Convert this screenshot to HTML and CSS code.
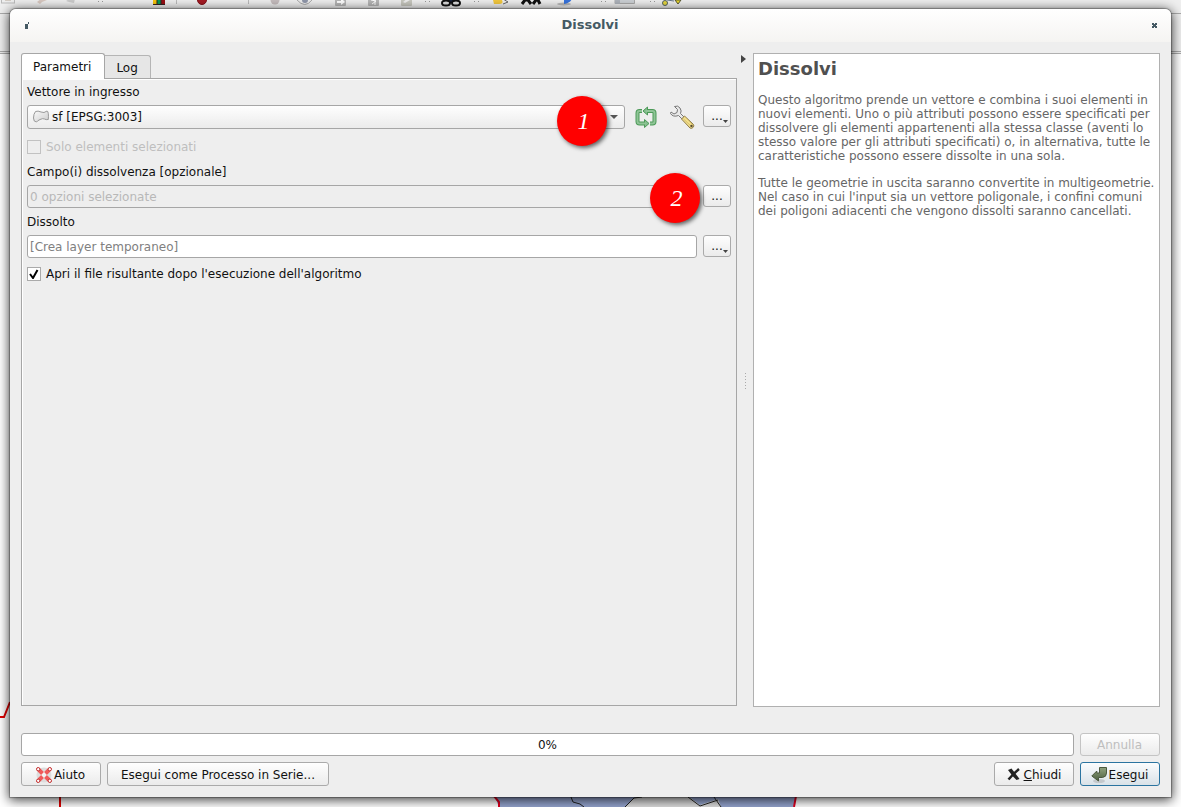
FILE: index.html
```html
<!DOCTYPE html>
<html lang="it">
<head>
<meta charset="utf-8">
<title>Dissolvi</title>
<link rel="stylesheet" href="styles.css">
</head>
<body>
<div class="backdrop" aria-hidden="true">
  <svg class="toolbar-art" width="1181" height="13" viewBox="0 0 1181 13">
    <rect x="1.500" y="-6" width="13" height="9" fill="#eee" stroke="#bbb"/><path d="M5 -2v2h6v-2" fill="none" stroke="#b8a999"/>
    <path d="M37 2l5-4 5 2-5 2-2 2z" fill="#d8c8c0"/><path d="M66 1l5-3 4 1-1 4-5-1z" fill="#ccc"/>
    <path d="M98 1.500h1m3 0h1m322 0h1m3 0h1m44 0h1m3 0h1m122 0h1m3 0h1m44 0h1m3 0h1" stroke="#999"/>
    <path d="M153 0h4v5h-4z" fill="#f6c40b"/><path d="M157 0h4v5h-4z" fill="#079a57"/><path d="M161 0h4v5h-4z" fill="#980e14"/><path d="M153 4.500h12M157 0v5M161 0v5" stroke="#322"/>
    <path d="M176.500 0v4M248.500 0v4" stroke="#bbb"/>
    <circle cx="202" cy="0" r="4.500" fill="#a51b24" stroke="#801018"/>
    <circle cx="275" cy="0" r="4.500" fill="#c6bdbe"/>
    <path d="M297 0q8 9 15 0" fill="#eee" stroke="#aaa"/><circle cx="305" cy="0" r="3" fill="#9097aa"/>
    <rect x="335" y="-5" width="11" height="11" rx="1" fill="#b7b7b7"/><path d="M337 1h4v-3l4 4-4 3v-2h-4z" fill="#fff"/>
    <rect x="368" y="-5" width="11" height="11" rx="1" fill="#b7b7b7"/><path d="M371 0l5 1-4 3m3-4v5" stroke="#fff" fill="none"/>
    <rect x="401" y="-5" width="11" height="11" rx="1" fill="#c8c8bf"/><path d="M403 2l5-4 2 2-5 3z" fill="#eee"/>
    <path d="M444 0h14v3h-14z" fill="#1b2742"/><ellipse cx="446" cy="3" rx="4" ry="2.500" fill="#ddd" stroke="#111" stroke-width="2"/><ellipse cx="456" cy="3" rx="4" ry="2.500" fill="#ddd" stroke="#111" stroke-width="2"/>
    <path d="M493 0h9q2 4-3 4h-5z" fill="#f3c83e"/><path d="M503 4l5-2-5-3" fill="none" stroke="#666"/>
    <path d="M522 4l3-4h3l3 4m2 0l3-4h2l2 4" fill="none" stroke="#111" stroke-width="3"/>
    <ellipse cx="564" cy="4" rx="7" ry="1.500" fill="#bbb"/><path d="M564 4v-5h8q-2 4-8 5z" fill="#3673dd"/>
    <path d="M615 -1h19.500v4.500H615z" fill="#ccd0d4" stroke="#aaa"/><path d="M615 0h5v4h-5z" fill="#aeb3bb"/>
    <circle cx="665" cy="3" r="2.500" fill="#e9d93c" stroke="#566"/><path d="M667 0l7 1" stroke="#678"/><path d="M675 0h6l-3 4z" fill="#f2df28" stroke="#553"/>
  </svg>
  <div class="toolbar-band"></div>
  <svg class="map-art" width="1181" height="107" viewBox="0 0 1181 107">
    <path d="M0 17h4l6-15M60 97v10" fill="none" stroke="#e00000" stroke-width="2"/>
    <path d="M495 97l4 10h295l2-10z" fill="#94a4ce"/>
    <path d="M625 107l9-9 8-2h46l12 9 18-6 3 8z" fill="#ddd"/>
    <path d="M571 97l2 5 7 2 4 3M625 107l9-9 8-1M688 97l12 9 18-6M714 97l7 10" fill="none" stroke="#222"/>
    <path d="M494 96l5 6v5M796 96l-2 11" fill="none" stroke="#e00020" stroke-width="2"/>
  </svg>
</div>

<main class="dialog">
  <header class="titlebar">
    <svg class="app-mark" width="6" height="7" viewBox="0 0 6 7"><path d="M1 2h3v5H1zM4 0h1v2H4z" fill="#455a64"/></svg>
    <h1 class="title">Dissolvi</h1>
    <button class="close" type="button" aria-label="Chiudi finestra"><svg width="5" height="5" viewBox="0 0 5 5"><path d="M0 0h2v1h1V0h2v2H4v1h1v2H3V4H2v1H0V3h1V2H0z" fill="#455a64"/></svg></button>
  </header>

  <div class="content">
    <div class="columns">
      <section class="left">
        <div class="tabs" role="tablist">
          <button class="tab tab-active" role="tab" aria-selected="true" type="button">Parametri</button>
          <button class="tab" role="tab" aria-selected="false" type="button">Log</button>
        </div>
        <form class="panel">
          <label class="label" for="layer">Vettore in ingresso</label>
          <div class="row">
            <div class="combo">
              <svg class="combo-icon" width="16" height="13" viewBox="0 0 16 13"><defs><linearGradient id="poly" x2="1" y2="1"><stop offset="0" stop-color="#fafafa"/><stop offset="1" stop-color="#ccc"/></linearGradient></defs><path d="M2.500 1.500Q5 .5 8 2t6-1q1 0 1.300 2.500t0 6Q13 10 11.500 9T7 9.500 3.500 12Q.5 12 .5 8t2-6.500z" fill="url(#poly)" stroke="#999"/></svg>
              <select class="select" id="layer"><option>sf [EPSG:3003]</option></select>
              <svg class="combo-arrow" width="8" height="4" viewBox="0 0 8 4"><path d="M0 0h8L4 4z" fill="#555"/></svg>
            </div>
            <button class="tool" type="button" aria-label="Itera">
              <svg width="24" height="22" viewBox="0 0 24 22"><g fill="none" stroke="#4c9a58" stroke-width="4" stroke-linejoin="round"><path d="M8 5H5.500Q3.500 5 3.500 7v8.500q0 2 2 2H12M16 17.500h2.500q2 0 2-2V7q0-2-2-2H12"/></g><path d="M9 5l4.500-4v8zM15 17.500l-4.500-4v8z" fill="#85bd8d" stroke="#4c9a58" stroke-linejoin="round"/><g fill="none" stroke="#8fc496" stroke-width="2"><path d="M8 5H5.500Q3.500 5 3.500 7v8.500q0 2 2 2H12M16 17.500h2.500q2 0 2-2V7q0-2-2-2H12"/></g></svg>
            </button>
            <button class="tool" type="button" aria-label="Opzioni avanzate">
              <svg width="26" height="24" viewBox="0 0 26 24"><path d="M5.500 1.500Q9 0 11 3t.5 5.500l3.500 3.500-2 2-3.500-3.500Q4 12.500 1.500 8.500L2 7l3 2 3-1.500.5-3z" fill="#e9e9e9" stroke="#777" stroke-linejoin="round"/><path d="M12.500 14l3-3 9 8.500q1 1.500-.5 3t-3 .5z" fill="#f3df8d" stroke="#8d7b48"/><path d="M14.500 14l7.500 7M16.500 12.500L24 20" stroke="#d6bf69"/><circle cx="22.500" cy="21" r="1.200" fill="#554a30"/></svg>
            </button>
            <button class="btn more" type="button">...<svg class="more-arrow" width="5" height="3" viewBox="0 0 5 3"><path d="M0 0h5L2.500 3z" fill="#444"/></svg></button>
            <span class="badge badge-one">1</span>
          </div>
          <label class="check check-off"><input type="checkbox" disabled>Solo elementi selezionati</label>
          <label class="label" for="fields">Campo(i) dissolvenza [opzionale]</label>
          <div class="row">
            <input class="field" id="fields" type="text" value="0 opzioni selezionate" disabled>
            <button class="btn more" type="button">...</button>
            <span class="badge badge-two">2</span>
          </div>
          <label class="label" for="output">Dissolto</label>
          <div class="row">
            <input class="field" id="output" type="text" placeholder="[Crea layer temporaneo]">
            <button class="btn more" type="button">...<svg class="more-arrow" width="5" height="3" viewBox="0 0 5 3"><path d="M0 0h5L2.500 3z" fill="#444"/></svg></button>
          </div>
          <div class="check">
            <span class="tick-wrap"><input type="checkbox" id="open" checked><svg class="tick" width="10" height="10" viewBox="0 0 10 10"><path d="M1 5l3 4 4.500-8" fill="none" stroke="#000" stroke-width="2"/></svg></span>
            <label for="open">Apri il file risultante dopo l'esecuzione dell'algoritmo</label>
          </div>
        </form>
      </section>

      <div class="splitter">
        <button class="collapse" type="button" aria-label="Comprimi"><svg width="5" height="8" viewBox="0 0 5 8"><path d="M0 0l5 4-5 4z" fill="#444"/></svg></button>
        <svg class="grip" width="2" height="16" viewBox="0 0 2 16"><path d="M.5 0v16" stroke="#aaa" stroke-dasharray="1 2"/></svg>
      </div>

      <aside class="help">
        <h2 class="help-title">Dissolvi</h2>
        <p class="help-text">Questo algoritmo prende un vettore e combina i suoi elementi in nuovi elementi. Uno o più attributi possono essere specificati per dissolvere gli elementi appartenenti alla stessa classe (aventi lo stesso valore per gli attributi specificati) o, in alternativa, tutte le caratteristiche possono essere dissolte in una sola.</p>
        <p class="help-text">Tutte le geometrie in uscita saranno convertite in multigeometrie. Nel caso in cui l'input sia un vettore poligonale, i confini comuni dei poligoni adiacenti che vengono dissolti saranno cancellati.</p>
      </aside>
    </div>

    <div class="progress-row">
      <div class="progress" role="progressbar" aria-valuenow="0" aria-valuemin="0" aria-valuemax="100">0%</div>
      <button class="btn action" type="button" disabled>Annulla</button>
    </div>
    <footer class="actions">
      <button class="btn action" type="button"><svg width="18" height="16" viewBox="0 0 18 16"><circle cx="8" cy="8" r="5.500" fill="none" stroke="#ddd" stroke-width="4"/><path d="M3 3l3.500 3.500M13 3L9.500 6.500M3 13l3.500-3.500M13 13L9.500 9.500" stroke="#f05a5a" stroke-width="4"/><g fill="#fff" stroke="#c22727"><circle cx="2.200" cy="2.200" r="1.700"/><circle cx="13.800" cy="2.200" r="1.700"/><circle cx="2.200" cy="13.800" r="1.700"/><circle cx="13.800" cy="13.800" r="1.700"/></g></svg>Aiuto</button>
      <button class="btn batch" type="button">Esegui come Processo in Serie...</button>
      <span class="spacer"></span>
      <button class="btn action" type="button"><svg width="18" height="16" viewBox="0 0 18 16"><path d="M2 3l3.500-1.500Q9 6 13.500 12l-3 1Q6 9 2 3z" fill="#222"/><path d="M13 2Q7 7 2.500 12.500" fill="none" stroke="#222" stroke-width="2.500"/></svg><span><u>C</u>hiudi</span></button>
      <button class="btn action primary" type="button"><svg width="18" height="16" viewBox="0 0 18 16"><defs><linearGradient id="enter" x2="0" y2="1"><stop offset="0" stop-color="#90a17e"/><stop offset="1" stop-color="#4c6040"/></linearGradient></defs><ellipse cx="8" cy="14" rx="6" ry="2" fill="#c3c8cc"/><path d="M8.500.5h7v5.500q0 4-4 4.500H7.500v3.500L.8 9l5-5v2h2.700z" fill="url(#enter)" stroke="#4b593e"/></svg>Esegui</button>
    </footer>
  </div>
</main>
</body>
</html>
```
FILE: styles.css
```css
* { box-sizing: border-box; }
body {
  margin: 0;
  min-height: 100vh;
  padding: 9px 10px;
  display: flex;
  position: relative;
  overflow: hidden;
  background: #fff;
  color: #111;
  font: 12px/14px "DejaVu Sans", sans-serif;
}
button, input, select { font: inherit; color: inherit; margin: 0; }
svg { display: block; flex: none; }

.backdrop { position: absolute; inset: 0; overflow: hidden; background: #fff; }
.toolbar-art { background: #efefef; }
.toolbar-band {
  height: 41px;
  background: #efefef;
  border-top: 1px solid #aaa;
  border-bottom: 3px double #aaa;
}
.map-art { position: absolute; left: 0; bottom: 0; }

.dialog {
  position: relative;
  flex: 1;
  display: flex;
  flex-direction: column;
  margin-bottom: 1px;
  background: #eee;
  border-radius: 6px 6px 0 0;
  box-shadow: 0 0 1px 1px rgba(0, 0, 0, .3), 0 2px 12px 1px rgba(0, 0, 0, .75);
}
.titlebar {
  display: flex;
  align-items: center;
  height: 33px;
  padding: 0 14px;
  border-radius: 6px 6px 0 0;
  background: linear-gradient(#fff, #f5f4f2);
}
.title {
  flex: 1;
  margin: 0 2px 2px 0;
  text-align: center;
  font-size: 13px;
  line-height: 16px;
  color: #455a64;
}
.close { border: 0; padding: 0; background: none; }

.content {
  flex: 1;
  display: flex;
  flex-direction: column;
  padding: 11px;
}
.columns { flex: 1; display: flex; margin-bottom: 26px; }
.left {
  flex: 716;
  display: flex;
  flex-direction: column;
  min-width: 0;
  margin-bottom: 1px;
}
.tabs { display: flex; align-items: flex-end; height: 25px; }
.tab {
  position: relative;
  height: 23px;
  padding: 2px 12px 0 11px;
  border: 1px solid #b5b5b5;
  border-left: 0;
  border-bottom: 0;
  border-radius: 0 3px 0 0;
  background: #e6e6e6;
}
.tab-active {
  height: 26px;
  margin-bottom: -1px;
  padding: 0 13px 0 11px;
  border: 1px solid #a6a6a6;
  border-bottom: 0;
  border-radius: 3px 3px 0 0;
  background: #fff;
  z-index: 1;
}
.panel {
  flex: 1;
  padding: 6px 5px 5px;
  border: 1px solid #a6a6a6;
  box-shadow: inset 1px 1px #fff;
}
.label { display: block; margin-bottom: 6px; }
.row { position: relative; display: flex; gap: 6px; margin-bottom: 7px; }
.combo { position: relative; flex: 1; }
.select {
  display: block;
  width: 100%;
  height: 24px;
  padding: 0 20px 0 24px;
  appearance: none;
  border: 1px solid #a6a6a6;
  border-radius: 3px;
  background: linear-gradient(#fefefe, #ebebeb);
}
.combo-icon { position: absolute; left: 6px; top: 5px; }
.combo-arrow { position: absolute; right: 7px; top: 10px; }
.tool {
  display: flex;
  align-items: center;
  justify-content: center;
  width: 30px;
  height: 24px;
  padding: 0;
  border: 0;
  background: none;
}
.btn {
  display: flex;
  align-items: center;
  justify-content: center;
  height: 24px;
  padding: 0;
  border: 1px solid #aaa;
  border-radius: 3px;
  background: linear-gradient(#fefefe, #ebebeb);
}
.more { position: relative; width: 28px; height: 22px; }
.more-arrow { position: absolute; right: 2px; bottom: 3px; }
.field {
  flex: 1;
  min-width: 0;
  height: 23px;
  padding: 0 2px;
  border: 1px solid #a6a6a6;
  border-radius: 3px;
  background: #fff;
}
.field::placeholder { color: #808080; opacity: 1; }
.field:disabled { background: #eee; color: #b8b8b8; }
.check {
  display: flex;
  align-items: center;
  gap: 5px;
  height: 18px;
}
.check-off { margin: 9px 0; color: #bebebe; }
.check input {
  display: block;
  width: 14px;
  height: 14px;
  appearance: none;
  border: 1px solid #aaa;
  background: #fff;
}
.check-off input { border-color: #c2c2c2; background: #eee; }
.tick-wrap { position: relative; }
.tick { position: absolute; left: 2px; top: 2px; pointer-events: none; }
.badge {
  position: absolute;
  top: -9px;
  width: 50px;
  height: 50px;
  padding-left: 3px;
  border-radius: 50%;
  background: #f00;
  box-shadow: 2px 2px 4px rgba(0, 0, 0, .6);
  color: #fff;
  font: italic 24px/50px "Liberation Serif", serif;
  text-align: center;
}
.badge-one { right: 124px; }
.badge-two { right: 31px; top: -12px; }

.splitter { position: relative; width: 16px; }
.collapse { display: block; margin: 2px 0 0 4px; padding: 0; border: 0; background: none; }
.grip { position: absolute; left: 8px; top: 50%; margin-top: -7px; }

.help {
  flex: 397;
  min-width: 0;
  padding: 4px;
  border: 1px solid #b0b0b0;
  background: #fff;
  color: #666;
}
.help-title { margin: 0 0 13px; font-size: 18px; line-height: 22px; color: #505050; }
.help-text { margin: 0 0 13px; }

.progress-row, .actions { display: flex; gap: 6px; }
.progress-row { margin-bottom: 6px; }
.progress-row .action { height: 23px; }
.progress {
  flex: 1;
  height: 23px;
  border: 1px solid #a6a6a6;
  border-radius: 3px;
  background: #fff;
  line-height: 22px;
  text-align: center;
}
.action { width: 80px; padding-right: 1px; }
.actions .btn { padding-top: 1px; }
.batch { padding: 0 13px; }
.spacer { flex: 1; }
.btn:disabled { color: #bebebe; border-color: #c4c4c4; }
.primary { border-color: #2b74a0; background: linear-gradient(#fbfcfd, #d9e2e8); }
```
